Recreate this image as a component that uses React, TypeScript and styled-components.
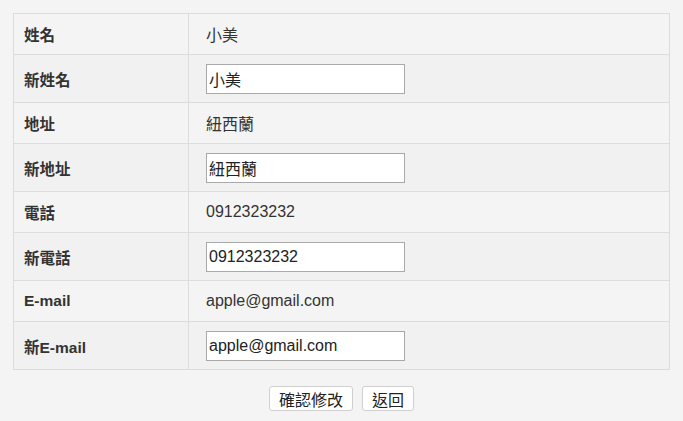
import React from 'react';
import styled, { createGlobalStyle } from 'styled-components';

const GlobalStyle = createGlobalStyle`
  html, body {
    margin: 0;
    background: #f4f4f4;
    font-family: "Liberation Sans", Arial, "Noto Sans CJK TC", sans-serif;
    color: #333;
  }
`;

const Page = styled.div`
  padding: 13px 13px 0;
`;

const Table = styled.table`
  width: 100%;
  border-collapse: collapse;
  border: 1px solid #dcdcdc;
`;

const Row = styled.tr<{ $alt?: boolean }>`
  background: ${(p) => (p.$alt ? '#f1f1f1' : '#f4f4f4')};
  border-bottom: 1px solid #dcdcdc;
  height: ${(p) => (p.$alt ? '48px' : '41px')};
`;

const Label = styled.th`
  width: 164px;
  text-align: left;
  padding: 0 0 0 10px;
  font-size: 15.5px;
  font-weight: bold;
  color: #333;
  border-right: 1px solid #dcdcdc;
`;

const Value = styled.td`
  padding: 0 0 0 17px;
  font-size: 16px;
  color: #333;
`;

const Input = styled.input`
  box-sizing: border-box;
  width: 199px;
  height: 30px;
  padding: 2px 2px;
  border: 1px solid #a9a9a9;
  background: #fff;
  font-family: "Liberation Sans", Arial, "Noto Sans CJK TC", sans-serif;
  font-size: 16px;
  color: #222;
  display: block;
`;

const Actions = styled.div`
  display: flex;
  justify-content: center;
  gap: 9px;
  margin-top: 16px;
`;

const Button = styled.button`
  height: 25px;
  padding: 0 9px;
  background: #fff;
  border: 1px solid #cfcfcf;
  border-radius: 3px;
  font-family: "Liberation Sans", Arial, "Noto Sans CJK TC", sans-serif;
  font-size: 16px;
  color: #222;
`;

const fields = [
  { label: '姓名', value: '小美' },
  { label: '地址', value: '紐西蘭' },
  { label: '電話', value: '0912323232' },
  { label: 'E-mail', value: 'apple@gmail.com' },
];

const App: React.FC = () => {
  return (
    <Page>
      <GlobalStyle />
      <Table>
        <tbody>
          {fields.map((f) => (
            <React.Fragment key={f.label}>
              <Row>
                <Label>{f.label}</Label>
                <Value>{f.value}</Value>
              </Row>
              <Row $alt>
                <Label>新{f.label}</Label>
                <Value>
                  <Input defaultValue={f.value} />
                </Value>
              </Row>
            </React.Fragment>
          ))}
        </tbody>
      </Table>
      <Actions>
        <Button>確認修改</Button>
        <Button>返回</Button>
      </Actions>
    </Page>
  );
};

export default App;
